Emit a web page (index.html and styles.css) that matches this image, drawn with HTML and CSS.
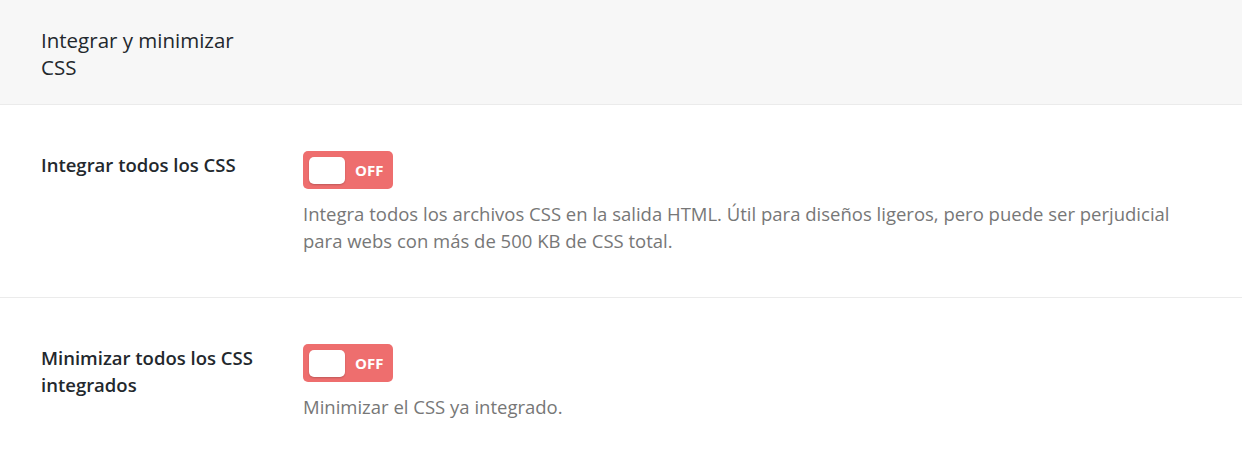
FILE: index.html
```html
<!DOCTYPE html>
<html lang="es">
<head>
<meta charset="utf-8">
<link rel="stylesheet" href="styles.css">
</head>
<body>
<div class="panel">
  <div class="header">
    <h2 class="title">Integrar y minimizar CSS</h2>
  </div>
  <div class="row">
    <div class="label">Integrar todos los CSS</div>
    <div class="field">
      <div class="toggle"><span class="knob"></span><span class="state">OFF</span></div>
      <p class="desc">Integra todos los archivos CSS en la salida HTML. Útil para diseños ligeros, pero puede ser perjudicial para webs con más de 500 KB de CSS total.</p>
    </div>
  </div>
  <div class="row">
    <div class="label">Minimizar todos los CSS integrados</div>
    <div class="field">
      <div class="toggle"><span class="knob"></span><span class="state">OFF</span></div>
      <p class="desc">Minimizar el CSS ya integrado.</p>
    </div>
  </div>
</div>
</body>
</html>
```
FILE: styles.css
```css
* { box-sizing: border-box; }
html, body { margin: 0; padding: 0; background: #fff; }
body { font-family: "Open Sans", "Noto Sans", sans-serif; color: #23282d; }
.header {
  background: #f7f7f7;
  border-bottom: 1px solid #ebebeb;
  padding: 27px 41px 22px;
  height: 105px;
}
.title {
  margin: 0;
  width: 224px;
  font-size: 20.5px;
  font-weight: 400;
  line-height: 27px;
}
.row {
  display: flex;
  padding: 46px 41px 43px;
  border-bottom: 1px solid #ebebeb;
}
.row:last-child { border-bottom: none; }
.label {
  width: 226px;
  flex: none;
  margin-right: 36px;
  font-size: 18.5px;
  font-weight: 600;
  line-height: 27px;
}
.field { flex: 1; }
.toggle {
  width: 90px;
  height: 38px;
  background: #ee6e6e;
  border-radius: 5px;
  display: flex;
  align-items: center;
  padding-left: 6px;
}
.knob {
  width: 36px;
  height: 27px;
  background: #fff;
  border-radius: 5px;
  box-shadow: 0 1px 2px rgba(0,0,0,0.2);
}
.state {
  margin-left: 10px;
  color: #fff;
  font-weight: 700;
  font-size: 15px;
}
.desc {
  margin: 11px 0 0;
  font-size: 18.5px;
  line-height: 27px;
  color: #777;
}
```
